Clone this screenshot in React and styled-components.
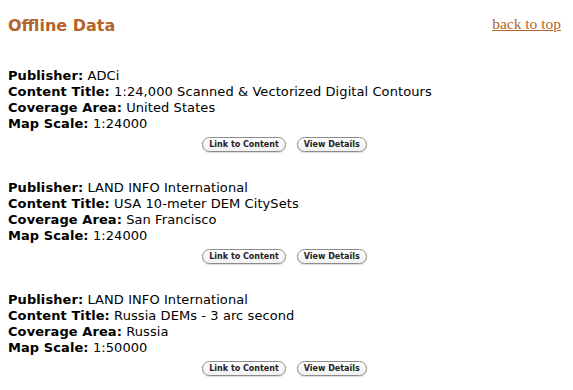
import styled, { createGlobalStyle } from "styled-components";

const GlobalStyle = createGlobalStyle`
  body {
    margin: 0;
    background: #ffffff;
    font-family: "DejaVu Sans", Verdana, sans-serif;
  }
`;

const items = [
  {
    publisher: "ADCi",
    title: "1:24,000 Scanned & Vectorized Digital Contours",
    area: "United States",
    scale: "1:24000",
  },
  {
    publisher: "LAND INFO International",
    title: "USA 10-meter DEM CitySets",
    area: "San Francisco",
    scale: "1:24000",
  },
  {
    publisher: "LAND INFO International",
    title: "Russia DEMs - 3 arc second",
    area: "Russia",
    scale: "1:50000",
  },
];

const Page = styled.div`
  height: 390px;
  display: flex;
  flex-direction: column;
  overflow: hidden;
`;

const Content = styled.div`
  flex: 1;
  padding: 0 12px 0 8px;
`;

const Header = styled.div`
  display: flex;
  justify-content: space-between;
  align-items: flex-start;
  padding-top: 14px;
  height: 54px;
`;

const Title = styled.h2`
  margin: 0;
  font-size: 16px;
  font-weight: bold;
  color: #b5652b;
  line-height: 24px;
`;

const TopLink = styled.a`
  font-family: "Liberation Serif", "Times New Roman", serif;
  font-size: 15.5px;
  color: #b5652b;
  text-decoration: underline;
  margin-top: 1px;
`;

const Entry = styled.div`
  height: 112px;
`;

const Line = styled.div`
  font-size: 13px;
  line-height: 16px;
  letter-spacing: 0.08px;
  color: #000;
  white-space: nowrap;
`;

const Label = styled.b`
  font-weight: bold;
`;

const Buttons = styled.div`
  display: flex;
  justify-content: center;
  gap: 11px;
  margin-top: 5px;
`;

const Button = styled.button`
  font-family: "DejaVu Sans", Verdana, sans-serif;
  font-size: 8px;
  font-weight: bold;
  color: #222;
  background: linear-gradient(#ffffff, #f1f1f1);
  border: 1px solid #8c8c8c;
  border-radius: 8px;
  height: 15px;
  padding: 0 6px;
  line-height: 13px;
  box-shadow: 0 1px 1px rgba(0, 0, 0, 0.15);
  cursor: pointer;
`;

const Scrollbar = styled.div`
  height: 3px;
  width: 506px;
  background: #dddddd;
`;

export default function App() {
  return (
    <Page>
      <GlobalStyle />
      <Content>
        <Header>
          <Title>Offline Data</Title>
          <TopLink href="#top">back to top</TopLink>
        </Header>
        {items.map((it, i) => (
          <Entry key={i}>
            <Line>
              <Label>Publisher:</Label> {it.publisher}
            </Line>
            <Line>
              <Label>Content Title:</Label> {it.title}
            </Line>
            <Line>
              <Label>Coverage Area:</Label> {it.area}
            </Line>
            <Line>
              <Label>Map Scale:</Label> {it.scale}
            </Line>
            <Buttons>
              <Button>Link to Content</Button>
              <Button>View Details</Button>
            </Buttons>
          </Entry>
        ))}
      </Content>
      <Scrollbar />
    </Page>
  );
}
